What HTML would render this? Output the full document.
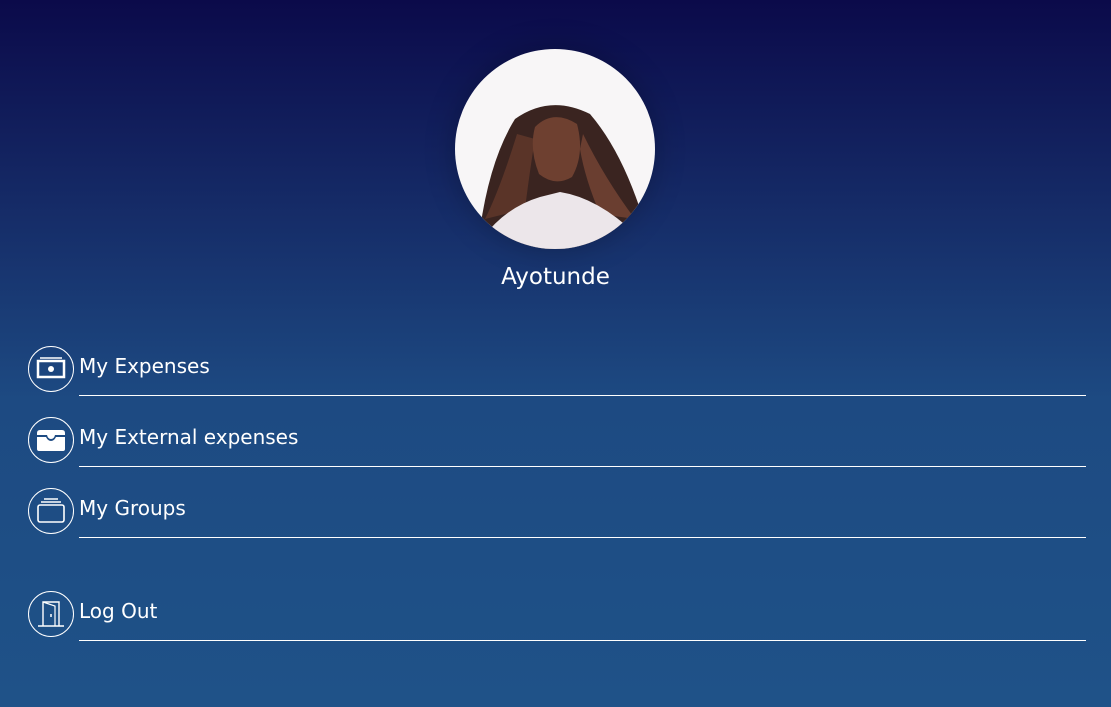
<!DOCTYPE html>
<html><head><style>
html,body{margin:0;padding:0;}
body{width:1111px;height:707px;overflow:hidden;background:linear-gradient(to bottom,#0b0a4a 0px,#152a66 200px,#1d4a82 400px,#1f5288 707px);font-family:"DejaVu Sans","Liberation Sans",sans-serif;color:#fff;position:relative;}
.av{position:absolute;left:455px;top:49px;width:200px;height:200px;border-radius:50%;overflow:hidden;box-shadow:0 0 30px rgba(0,0,0,0.25);}
.name{position:absolute;left:0;width:1111px;top:264px;text-align:center;font-size:23px;}
.item{position:absolute;left:28px;width:1058px;height:50px;}
.ic{position:absolute;left:0;top:0;width:44px;height:44px;border:1px solid #fff;border-radius:50%;}
.ic svg{position:absolute;left:0;top:0;}
.lbl{position:absolute;left:51px;top:8px;font-size:20px;}
.ln{position:absolute;left:51px;right:0;height:1px;background:#fff;}
</style></head><body>
<div class="av"><svg width="200" height="200" viewBox="0 0 200 200">
<rect width="200" height="200" fill="#f8f6f7"/>
<path d="M25 180 Q35 110 60 70 Q95 45 135 65 Q165 100 185 160 L180 200 L30 200Z" fill="#3a2420"/>
<path d="M62 85 Q45 140 30 170 L70 160 Q75 120 80 90Z" fill="#5a3428"/>
<path d="M128 85 Q150 130 180 170 L145 165 Q130 130 125 100Z" fill="#6a3e30"/>
<path d="M80 78 Q98 60 122 75 Q130 105 117 128 Q100 138 84 125 Q74 100 80 78Z" fill="#6e4030"/>
<path d="M20 200 Q45 160 85 148 L105 143 Q150 150 195 200Z" fill="#ece6ea"/>
</svg></div>
<div class="name">Ayotunde</div>

<div class="item" style="top:346px"><div class="ic"><svg width="44" height="44"><rect x="9" y="14" width="26" height="16" fill="none" stroke="#fff" stroke-width="2.5"/><line x1="11" y1="11" x2="33" y2="11" stroke="#fff" stroke-width="1.5"/><circle cx="22" cy="22" r="3" fill="#fff"/></svg></div><div class="lbl">My Expenses</div><div class="ln" style="top:49px"></div></div>

<div class="item" style="top:417px"><div class="ic"><svg width="44" height="44"><path d="M8 15 Q8 12 11 12 L33 12 Q36 12 36 15 L36 17 L26 17 Q25 21 22 21 Q19 21 18 17 L8 17Z" fill="#fff"/><path d="M8 19 L17 19 Q19 23 22 23 Q25 23 27 19 L36 19 L36 31 Q36 33 34 33 L10 33 Q8 33 8 31Z" fill="#fff"/></svg></div><div class="lbl">My External expenses</div><div class="ln" style="top:49px"></div></div>

<div class="item" style="top:488px"><div class="ic"><svg width="44" height="44"><rect x="9" y="16" width="26" height="17" rx="2" fill="none" stroke="#fff" stroke-width="1.6"/><line x1="12" y1="13" x2="32" y2="13" stroke="#fff" stroke-width="1.5"/><line x1="15" y1="10" x2="29" y2="10" stroke="#fff" stroke-width="1.5"/></svg></div><div class="lbl">My Groups</div><div class="ln" style="top:49px"></div></div>

<div class="item" style="top:591px"><div class="ic"><svg width="44" height="44"><path d="M14 34 L14 10 L30 10 L30 34" fill="none" stroke="#fff" stroke-width="1.4"/><path d="M14 10 L26 14 L26 34" fill="none" stroke="#fff" stroke-width="1.2"/><line x1="9" y1="34" x2="35" y2="34" stroke="#fff" stroke-width="1.4"/><line x1="22" y1="22" x2="22" y2="25" stroke="#fff" stroke-width="1.5"/></svg></div><div class="lbl">Log Out</div><div class="ln" style="top:49px"></div></div>
</body></html>
